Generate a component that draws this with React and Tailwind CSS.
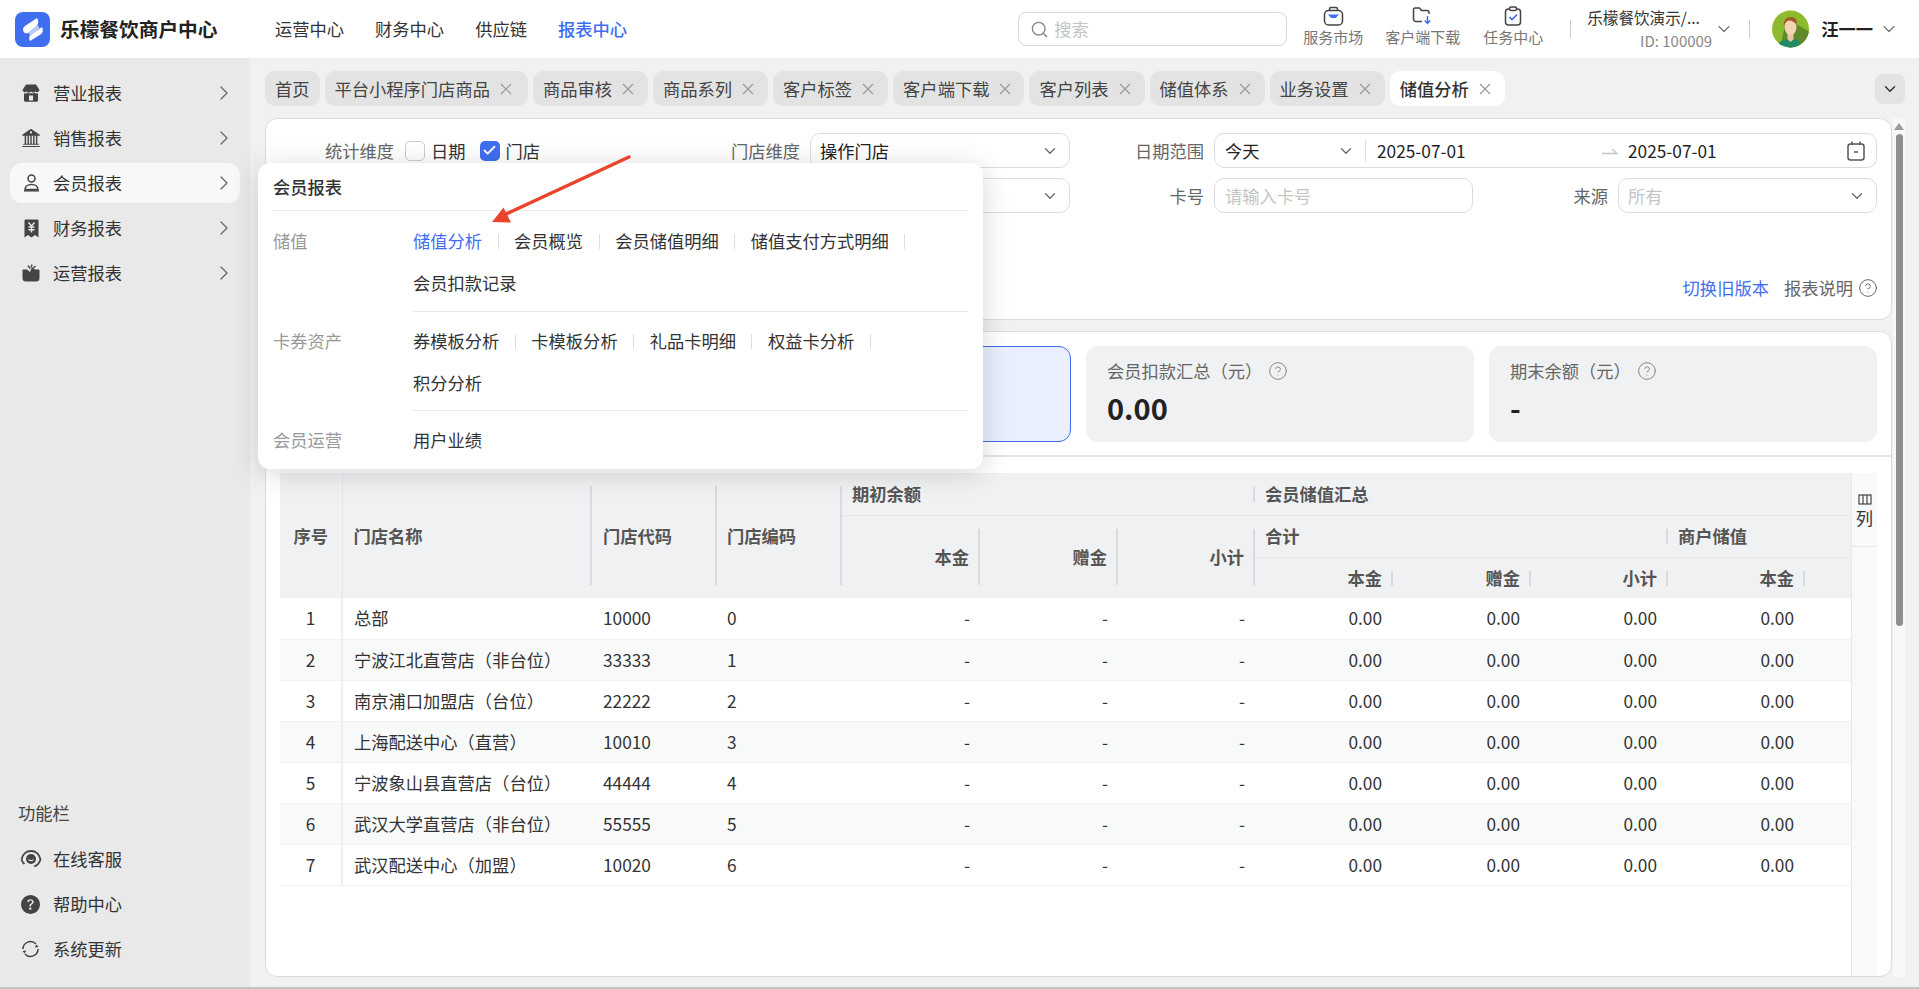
import { BsBank2, BsQuestionCircleFill } from 'react-icons/bs';
import { ChevronDown, ChevronRight, Check, Search, CircleHelp } from 'lucide-react';

const navItems = ['运营中心', '财务中心', '供应链', '报表中心'];
const sideItems = ['营业报表', '销售报表', '会员报表', '财务报表', '运营报表'];
const tabs = [
  ['平台小程序门店商品', 'pr-[16px]'],
  ['商品审核', 'pr-[14px]'],
  ['商品系列', 'pr-[14px]'],
  ['客户标签', 'pr-[14px]'],
  ['客户端下载', 'pr-[13px]'],
  ['客户列表', 'pr-[14px]'],
  ['储值体系', 'pr-[14px]'],
  ['业务设置', 'pr-[14px]'],
];
const stores = [
  ['1', '总部', '10000', '0'],
  ['2', '宁波江北直营店（非台位）', '33333', '1'],
  ['3', '南京浦口加盟店（台位）', '22222', '2'],
  ['4', '上海配送中心（直营）', '10010', '3'],
  ['5', '宁波象山县直营店（台位）', '44444', '4'],
  ['6', '武汉大学直营店（非台位）', '55555', '5'],
  ['7', '武汉配送中心（加盟）', '10020', '6'],
];
const menuSections = [
  { label: '储值', labelPad: 'pt-[18px]', bodyPad: 'pt-[9px] pb-[7px] border-b border-[#e8e8e8]', rows: [[['储值分析', true], ['会员概览'], ['会员储值明细'], ['储值支付方式明细']], [['会员扣款记录']]] },
  { label: '卡券资产', labelPad: 'pt-[17px]', bodyPad: 'pt-[8px] pb-[6px] border-b border-[#e8e8e8]', rows: [[['券模板分析'], ['卡模板分析'], ['礼品卡明细'], ['权益卡分析']], [['积分分析']]] },
  { label: '会员运营', labelPad: 'pt-[17px]', bodyPad: 'pt-[8px]', rows: [[['用户业绩']]] },
];

function CloseIcon() {
  return (
    <svg width="12" height="12" viewBox="0 0 12 12" className="text-[#999]" fill="none" stroke="currentColor" strokeWidth="1.2">
      <path d="M1 1l10 10M11 1L1 11" />
    </svg>
  );
}

function SideIcon({ name }) {
  if (name === '营业报表') {
    return (
      <svg width="18" height="18" viewBox="0 0 18 18" fill="#444">
        <path d="M4 0.5h10l3.5 5.5a2.6 2.6 0 0 1-4.2 1.6 3 3 0 0 1-4.3 0 3 3 0 0 1-4.3 0A2.6 2.6 0 0 1 0.5 6z" />
        <path fillRule="evenodd" d="M2 9.2c1.3.4 2.5.2 3.5-.4 1.1.7 2.4.9 3.5.3 1.1.6 2.4.4 3.5-.3 1 .6 2.2.8 3.5.4v7.1a1.5 1.5 0 0 1-1.5 1.5h-11A1.5 1.5 0 0 1 2 16.3zM7 11.5v5h4v-5z" />
      </svg>
    );
  }
  if (name === '销售报表') return <BsBank2 size={18} color="#444" />;
  if (name === '会员报表') {
    return (
      <svg width="17" height="18" viewBox="0 0 17 18" fill="none" stroke="#444" strokeWidth="1.5">
        <circle cx="8.5" cy="4.5" r="3.5" />
        <path d="M2 15.5c0-3 2.8-5 6.5-5s6.5 2 6.5 5z" strokeLinejoin="round" />
        <path d="M1 16.8h15" />
      </svg>
    );
  }
  if (name === '财务报表') {
    return (
      <svg width="15" height="19" viewBox="0 0 15 19">
        <path d="M1.5 0.5h12a1 1 0 0 1 1 1v17l-3.5-2.5-3.5 2.5-3.5-2.5-3.5 2.5v-17a1 1 0 0 1 1-1z" fill="#444" />
        <path d="M4.5 3.5l3 3.5 3-3.5M7.5 7v6.5M4.5 8h6M4.5 10.8h6" stroke="#e9e9e9" strokeWidth="1.4" fill="none" />
      </svg>
    );
  }
  return (
    <svg width="18" height="18" viewBox="0 0 18 18" fill="#444">
      <path d="M0.5 6.5c0-.6.4-1 1-1h3.5l3 2.5 2-5 3 2.5h3.5c.6 0 1 .4 1 1v7.5a3.5 3.5 0 0 1-3.5 3.5H4a3.5 3.5 0 0 1-3.5-3.5z" />
      <path d="M6 1.5l2.2 3M10 0.5l-.8 3M13.5 2l-2 2" stroke="#444" strokeWidth="1.3" fill="none" />
    </svg>
  );
}

function ServiceIcon() {
  return (
    <svg width="21" height="20" viewBox="0 0 21 20" fill="none" stroke="#444" strokeWidth="1.5">
      <rect x="1.5" y="4.5" width="18" height="14.5" rx="4" />
      <path d="M6.5 4.5V3A1.5 1.5 0 0 1 8 1.5h5A1.5 1.5 0 0 1 14.5 3v1.5" />
      <path d="M5 8.5h11l-3.2 3.5H8.2z" fill="#3f6ef0" stroke="none" />
    </svg>
  );
}

function RefreshIcon() {
  return (
    <svg width="21" height="20" viewBox="0 0 21 20" fill="none" stroke="#444" strokeWidth="1.5">
      <path d="M3 10a7.5 7.5 0 0 1 13-5" />
      <path d="M18 10a7.5 7.5 0 0 1-13 5" />
      <path d="M18.5 8l-2-2.5-1.8 3z" fill="#444" stroke="none" />
      <path d="M2.5 12l2 2.5 1.8-3z" fill="#444" stroke="none" />
    </svg>
  );
}

function HeadsetIcon() {
  return (
    <svg width="22" height="22" viewBox="0 0 22 22" fill="none" stroke="#444">
      <path d="M1.5 11.5C2.5 6 6.5 3 11 3s8.5 3 9.5 8.5c-1 3.5-3.5 6-6.5 7" strokeWidth="1.8" />
      <circle cx="11" cy="11" r="5" fill="#444" stroke="none" />
      <path d="M8.5 11.5c1 1.4 4 1.4 5 0" stroke="#e9e9e9" strokeWidth="1.2" />
      <path d="M1.5 11.5c.6 2 1.5 3.3 3 4.5" strokeWidth="1.8" />
    </svg>
  );
}

function SelectBox({ value, placeholder, className }) {
  return (
    <div className={`flex h-[35px] items-center justify-between rounded-[10px] border border-[#dcdcdc] bg-white pl-[9px] pr-[10px] ${className}`}>
      <span className={placeholder ? 'text-[#c4c4c4]' : 'text-[#222]'}>{value || placeholder}</span>
      <ChevronDown size={18} color="#666" strokeWidth={1.6} />
    </div>
  );
}

function FilterField({ label, span, children }) {
  return (
    <div className={`flex items-center ${span ? 'col-span-2' : ''}`}>
      <span className="w-[122px] shrink-0 text-right text-[#666]">{label}</span>
      <div className="ml-[10px] flex-1">{children}</div>
    </div>
  );
}

function KpiCard({ label, value }) {
  return (
    <div className="h-[96px] w-[388px] rounded-[12px] bg-[#f0f1f3] pl-[21px] pt-[13px]">
      <div className="flex h-[24px] items-center text-[#666]">
        {label}
        <CircleHelp size={20} color="#888" strokeWidth={1.2} className="ml-[6px]" />
      </div>
      <div className="mt-[5px] text-[29px] font-bold leading-[38px] text-[#222]">{value}</div>
    </div>
  );
}

function Divider({ className }) {
  return <i className={`absolute block w-[2px] bg-[#d9dadd] ${className}`} />;
}

export default function App() {
  return (
    <div className="relative flex h-[989px] w-full flex-col overflow-hidden bg-[#f1f1f2] text-[17.28px] leading-[24px] text-[#333] [font-family:'Noto_Sans_CJK_SC','Noto_Sans',sans-serif]">
      {/* top bar */}
      <header className="flex h-[58px] shrink-0 items-center bg-white pl-[15px] pr-[20px]">
        <div className="h-[35px] w-[35px] rounded-[8px] bg-[#3f6ef0]">
          <svg width="35" height="35" viewBox="0 0 35 35">
            <path d="M22 6C24 9.5 23.5 12 21 14.5L14 20.5C12 22 9.5 21.5 8.5 19.5C7.5 17.5 8 15.5 10 14Z" fill="#fff" />
            <path d="M27 15C28.5 18 28 20.5 25.5 22.5L15 29C13.5 26.5 14 24 16 22.5Z" fill="#fff" />
            <path d="M22.5 13L13.5 21L15.5 23.5L24.5 16Z" fill="#b9cbfa" />
          </svg>
        </div>
        <span className="ml-[10px] w-[164px] text-[19.7px] font-bold text-[#222]">乐檬餐饮商户中心</span>
        <nav className="ml-[51px] flex gap-[31px]">
          {navItems.map((item) => (
            <span key={item} className={item === '报表中心' ? 'font-medium text-[#3f6ef0]' : 'text-[#333]'}>{item}</span>
          ))}
        </nav>
        <div className="ml-auto flex h-[34px] w-[269px] items-center rounded-[8px] border border-[#d9d9d9] bg-white pl-[11px]">
          <Search size={19} color="#888" strokeWidth={1.8} />
          <span className="ml-[5px] text-[#c4c4c4]">搜索</span>
        </div>
        <div className="mb-[6px] ml-[16px] flex w-[60px] flex-col items-center text-[15px] leading-[20px] text-[#777]">
          <ServiceIcon />
          <span className="mt-[1px]">服务市场</span>
        </div>
        <div className="mb-[6px] ml-[22px] flex w-[75px] flex-col items-center text-[15px] leading-[20px] text-[#777]">
          <svg width="21" height="20" viewBox="0 0 21 20" fill="none" stroke="#444" strokeWidth="1.5">
            <path d="M10 15.5H4a2.5 2.5 0 0 1-2.5-2.5V3.5A1.5 1.5 0 0 1 3 2h4.5l2 2.5H15c1.1 0 2 .9 2 2V8" />
            <path d="M15.5 10v7M12.8 14.5l2.7 3 2.7-3" stroke="#3f6ef0" />
          </svg>
          <span className="mt-[1px]">客户端下载</span>
        </div>
        <div className="mb-[6px] ml-[23px] flex w-[60px] flex-col items-center text-[15px] leading-[20px] text-[#777]">
          <svg width="18" height="20" viewBox="0 0 18 20" fill="none" stroke="#444" strokeWidth="1.5">
            <rect x="1.5" y="3" width="15" height="16" rx="3" />
            <rect x="5.5" y="1" width="7" height="3.5" rx="1.5" fill="#fff" />
            <path d="M5.5 11l2.5 2.5 5-5" stroke="#3f6ef0" strokeWidth="1.7" />
          </svg>
          <span className="mt-[1px]">任务中心</span>
        </div>
        <i className="ml-[27px] block h-[18px] w-[1px] bg-[#ccc]" />
        <div className="ml-[16px] flex w-[125px] flex-col items-end text-[15.6px] leading-[22px]">
          <span className="self-start whitespace-nowrap text-[#333]">乐檬餐饮演示/...</span>
          <span className="mt-[2px] text-[15px] text-[#888]">ID: 100009</span>
        </div>
        <ChevronDown size={20} color="#777" strokeWidth={1.5} className="ml-[2px]" />
        <i className="ml-[15px] block h-[18px] w-[1px] bg-[#ccc]" />
        <svg width="37" height="38" viewBox="0 0 37 38" className="ml-[22px]">
          <defs>
            <clipPath id="avatar-clip"><circle cx="18.5" cy="19" r="18.5" /></clipPath>
          </defs>
          <g clipPath="url(#avatar-clip)">
            <rect width="37" height="38" fill="#8dbb2e" />
            <path d="M14 8l24 14v18H18L10 30z" fill="#5f8a2c" />
            <path d="M6 38c0-7 5-9 12.5-9S29 31 29 38z" fill="#1f8a63" />
            <path d="M15.5 23h6v6.5l-3 2.5-3-2.5z" fill="#eac6a2" />
            <ellipse cx="18.5" cy="17" rx="6" ry="8" fill="#f2d3b2" />
            <path d="M12 16c-1-6 3-9 7-9s7 3 5.5 8c-1.5-3-5-4.5-7-4.5-2.5 0-4.5 2-5.5 5.5z" fill="#a45a22" />
          </g>
        </svg>
        <span className="ml-[12px] font-semibold text-[#222]">汪一一</span>
        <ChevronDown size={20} color="#777" strokeWidth={1.5} className="ml-[6px]" />
      </header>

      <div className="flex min-h-0 flex-1">
        {/* sidebar */}
        <aside className="flex w-[250px] shrink-0 flex-col justify-between bg-[#e9e9e9] px-[10px] pb-[18px] pt-[15px]">
          <ul className="flex flex-col gap-[5px]">
            {sideItems.map((item) => (
              <li key={item} className={`flex h-[40px] items-center rounded-[12px] pl-[12px] pr-[4px] ${item === '会员报表' ? 'bg-[#f8f8f8]' : ''}`}>
                <span className="flex w-[18px] justify-center"><SideIcon name={item} /></span>
                <span className="ml-[13px] flex-1 text-[#333]">{item}</span>
                <ChevronRight size={24} color="#666" strokeWidth={1.25} />
              </li>
            ))}
          </ul>
          <div>
            <div className="pl-[8px] text-[#444]">功能栏</div>
            <ul className="mt-[14px] flex flex-col gap-[5px]">
              <li className="flex h-[40px] items-center pl-[10px]">
                <HeadsetIcon />
                <span className="ml-[11px]">在线客服</span>
              </li>
              <li className="flex h-[40px] items-center pl-[11px]">
                <BsQuestionCircleFill size={19} color="#444" />
                <span className="ml-[13px]">帮助中心</span>
              </li>
              <li className="flex h-[40px] items-center pl-[10px]">
                <RefreshIcon />
                <span className="ml-[12px]">系统更新</span>
              </li>
            </ul>
          </div>
        </aside>

        {/* main */}
        <main className="flex min-w-0 flex-1 flex-col pb-[10px] pl-[15px]">
          <div className="flex h-[60px] shrink-0 items-start justify-between pr-[14px] pt-[13px]">
            <div className="flex gap-[5px]">
              <div className="flex h-[35px] items-center rounded-[10px] bg-[#e3e3e3] px-[10px] text-[#444]">首页</div>
              {tabs.map(([tab, pad]) => (
                <div key={tab} className={`flex h-[35px] items-center rounded-[10px] bg-[#e3e3e3] pl-[10px] text-[#444] ${pad}`}>
                  {tab}
                  <span className="ml-[10px]"><CloseIcon /></span>
                </div>
              ))}
              <div className="flex h-[35px] items-center rounded-[10px] bg-white pl-[10px] pr-[14px] font-medium text-[#333]">
                储值分析
                <span className="ml-[10px]"><CloseIcon /></span>
              </div>
            </div>
            <div className="mt-[3px] flex h-[30px] w-[30px] items-center justify-center rounded-[8px] bg-[#e3e3e3]">
              <ChevronDown size={18} color="#333" strokeWidth={2} />
            </div>
          </div>

          <div className="flex min-h-0 flex-1">
            <div className="flex w-[1627px] shrink-0 flex-col gap-[11px]">
              {/* filters */}
              <section className="h-[202px] shrink-0 rounded-[12px] border border-[#dcdcdc] bg-white pl-[6px] pr-[13px] pt-[14px]">
                <div className="grid grid-cols-[391px_389px_389px_391px] gap-x-[15px] gap-y-[10px]">
                  <FilterField label="统计维度">
                    <div className="flex h-[35px] items-center text-[#333]">
                      <span className="ml-[1px] h-[20px] w-[20px] rounded-[5px] border border-[#ccc] bg-white" />
                      <span className="ml-[6px]">日期</span>
                      <span className="ml-[14px] flex h-[20px] w-[20px] items-center justify-center rounded-[5px] bg-[#3f6ef0]">
                        <Check size={15} color="#fff" strokeWidth={3} />
                      </span>
                      <span className="ml-[6px]">门店</span>
                    </div>
                  </FilterField>
                  <FilterField label="门店维度">
                    <SelectBox value="操作门店" className="w-[260px]" />
                  </FilterField>
                  <FilterField label="日期范围" span>
                    <div className="flex h-[35px] w-[663px] items-center rounded-[10px] border border-[#dcdcdc] pl-[10px] pr-[11px] text-[#222]">
                      <span className="w-[112px]">今天</span>
                      <ChevronDown size={18} color="#666" strokeWidth={1.6} />
                      <i className="ml-[10px] block h-[22px] w-[1px] bg-[#ddd]" />
                      <span className="ml-[11px] w-[225px]">2025-07-01</span>
                      <svg width="16" height="8" viewBox="0 0 16 8" fill="none" stroke="#c4c4c4" strokeWidth="1.3">
                        <path d="M0 6.5h15L10 2" />
                      </svg>
                      <span className="ml-[10px] flex-1">2025-07-01</span>
                      <svg width="18" height="20" viewBox="0 0 18 20" fill="none" stroke="#555" strokeWidth="1.5">
                        <rect x="1" y="3" width="16" height="16" rx="2.5" />
                        <path d="M5 0.5V4M13 0.5V4M7 11h4" />
                      </svg>
                    </div>
                  </FilterField>
                  <FilterField label="">
                    <span />
                  </FilterField>
                  <FilterField label="">
                    <SelectBox value=" " className="w-[260px]" />
                  </FilterField>
                  <FilterField label="卡号">
                    <div className="flex h-[35px] w-[259px] items-center rounded-[10px] border border-[#dcdcdc] pl-[10px] text-[#c4c4c4]">请输入卡号</div>
                  </FilterField>
                  <FilterField label="来源">
                    <SelectBox placeholder="所有" className="w-[259px]" />
                  </FilterField>
                </div>
                <div className="mt-[63px] flex items-center justify-end">
                  <span className="text-[#3f6ef0]">切换旧版本</span>
                  <span className="ml-[15px] text-[#666]">报表说明</span>
                  <CircleHelp size={20} color="#666" strokeWidth={1.2} className="ml-[5px]" />
                </div>
              </section>

              {/* summary + table */}
              <section className="flex min-h-0 flex-1 flex-col rounded-[12px] border border-[#dcdcdc] bg-white">
                <div className="flex h-[125px] shrink-0 gap-[15px] border-b-2 border-[#e4e4e4] pl-[13px] pt-[14px]">
                  <div className="h-[96px] w-[388px] rounded-[12px] bg-[#f0f1f3]" />
                  <div className="h-[96px] w-[389px] rounded-[12px] border border-[#3f6ef0] bg-[#e9effc]" />
                  <KpiCard label="会员扣款汇总（元）" value="0.00" />
                  <KpiCard label="期末余额（元）" value="-" />
                </div>
                <div className="ml-[14px] mr-[14px] mt-[16px] flex min-h-0 flex-1">
                  <div className="min-w-0 flex-1 overflow-hidden">
                    <table className="w-[1571px] table-fixed border-collapse text-[#333]">
                      <colgroup>
                        {[62, 249, 125, 125, 138, 138, 137, 138, 138, 137, 137, 47].map((w, i) => (
                          <col key={i} style={{ width: w }} />
                        ))}
                      </colgroup>
                      <thead className="bg-[#f0f1f3] font-semibold text-[#555]">
                        <tr className="h-[42px]">
                          <th rowSpan={3} className="border-r border-[#e4e5e8] text-center font-semibold">序号</th>
                          <th rowSpan={3} className="relative pl-[11px] text-left font-semibold">门店名称<Divider className="bottom-[13px] right-[-1px] top-[13px]" /></th>
                          <th rowSpan={3} className="relative pl-[12px] text-left font-semibold">门店代码<Divider className="bottom-[13px] right-[-1px] top-[13px]" /></th>
                          <th rowSpan={3} className="relative pl-[11px] text-left font-semibold">门店编码<Divider className="bottom-[13px] right-[-1px] top-[13px]" /></th>
                          <th colSpan={3} className="border-b border-[#e4e5e8] pl-[11px] text-left font-semibold">期初余额</th>
                          <th colSpan={5} className="relative border-b border-[#e4e5e8] pl-[11px] text-left font-semibold">会员储值汇总<Divider className="left-[-1px] top-[14px] h-[15px] w-[1px]" /></th>
                        </tr>
                        <tr className="h-[42px]">
                          <th rowSpan={2} className="relative pr-[10px] text-right font-semibold">本金<Divider className="bottom-[13px] right-[-1px] top-[13px]" /></th>
                          <th rowSpan={2} className="relative pr-[10px] text-right font-semibold">赠金<Divider className="bottom-[13px] right-[-1px] top-[13px]" /></th>
                          <th rowSpan={2} className="relative pr-[10px] text-right font-semibold">小计<Divider className="bottom-[13px] right-[-1px] top-[13px]" /></th>
                          <th colSpan={3} className="border-b border-[#e4e5e8] pl-[11px] text-left font-semibold">合计</th>
                          <th colSpan={2} className="relative border-b border-[#e4e5e8] pl-[11px] text-left font-semibold">商户储值<Divider className="left-[-1px] top-[13px] h-[15px] w-[1px]" /></th>
                        </tr>
                        <tr className="h-[41px]">
                          {['本金', '赠金', '小计', '本金'].map((h, i) => (
                            <th key={i} className="relative pr-[10px] text-right font-semibold">{h}<Divider className="right-[-1px] top-[13px] h-[15px] w-[1px]" /></th>
                          ))}
                          <th />
                        </tr>
                      </thead>
                      <tbody>
                        {stores.map(([no, name, code, num], idx) => (
                          <tr key={no} className={`h-[41.14px] border-b border-[#f0f1f1] ${idx % 2 === 1 ? 'bg-[#f8f9f9]' : 'bg-white'}`}>
                            <td className="border-r-2 border-[#eeeeef] text-center">{no}</td>
                            <td className="whitespace-nowrap pl-[11px]">{name}</td>
                            <td className="pl-[12px]">{code}</td>
                            <td className="pl-[11px]">{num}</td>
                            {['-', '-', '-'].map((v, i) => (
                              <td key={i} className="pr-[9px] text-right">{v}</td>
                            ))}
                            {['0.00', '0.00', '0.00', '0.00'].map((v, i) => (
                              <td key={i} className="pr-[10px] text-right">{v}</td>
                            ))}
                            <td />
                          </tr>
                        ))}
                      </tbody>
                    </table>
                  </div>
                  <div className="w-[26px] shrink-0 border-l border-[#e8e8ea] bg-[#f8f9fb]">
                    <div className="flex h-[74px] flex-col items-center border-b border-[#e8e8ea] pt-[21px]">
                      <svg width="14" height="11" viewBox="0 0 14 11" fill="none" stroke="#444" strokeWidth="1.2">
                        <rect x="1" y="1" width="12" height="9" />
                        <path d="M5 1v9M9 1v9" />
                      </svg>
                      <span className="mt-[1px]">列</span>
                    </div>
                  </div>
                </div>
              </section>
            </div>

            {/* page scrollbar */}
            <div className="ml-[1px] flex w-[12px] shrink-0 flex-col items-center bg-[#f8f8f8] pt-[5px]">
              <svg width="10" height="7" viewBox="0 0 10 7" fill="#9a9a9a"><path d="M5 0l5 7H0z" /></svg>
              <div className="mt-[4px] h-[492px] w-[7px] rounded-[4px] bg-[#8f8f8f]" />
            </div>
          </div>
        </main>
      </div>
      <div className="h-[2px] shrink-0 bg-[#c4c4c4]" />

      {/* flyout for 会员报表 */}
      <div className="absolute left-[258px] top-[163px] h-[306px] w-[725px] rounded-[12px] bg-white px-[15px] shadow-[0_4px_28px_rgba(0,0,0,0.16)]">
        <div className="flex h-[48px] items-center border-b border-[#e8e8e8] font-medium text-[#333]">会员报表</div>
        {menuSections.map((section) => (
          <div key={section.label} className="flex">
            <div className={`w-[140px] text-[#999] ${section.labelPad}`}>{section.label}</div>
            <div className={`flex-1 ${section.bodyPad}`}>
              {section.rows.map((row, ri) => (
                <div key={ri} className="flex h-[42px] items-center">
                  {row.map(([text, active]) => (
                    <span key={text} className="flex items-center">
                      <span className={active ? 'text-[#3f6ef0]' : 'text-[#333]'}>{text}</span>
                      {row.length > 1 && <i className="mx-[15.5px] block h-[15px] w-[1px] bg-[#ddd]" />}
                    </span>
                  ))}
                </div>
              ))}
            </div>
          </div>
        ))}
      </div>

      {/* annotation arrow */}
      <svg width="160" height="80" viewBox="0 0 160 80" className="absolute left-[480px] top-[150px]">
        <path d="M149 7L24 65" stroke="#e8452c" strokeWidth="3.5" strokeLinecap="round" />
        <path d="M12 72l11.5-14.5L31 72.5z" fill="#e8452c" />
      </svg>
    </div>
  );
}
